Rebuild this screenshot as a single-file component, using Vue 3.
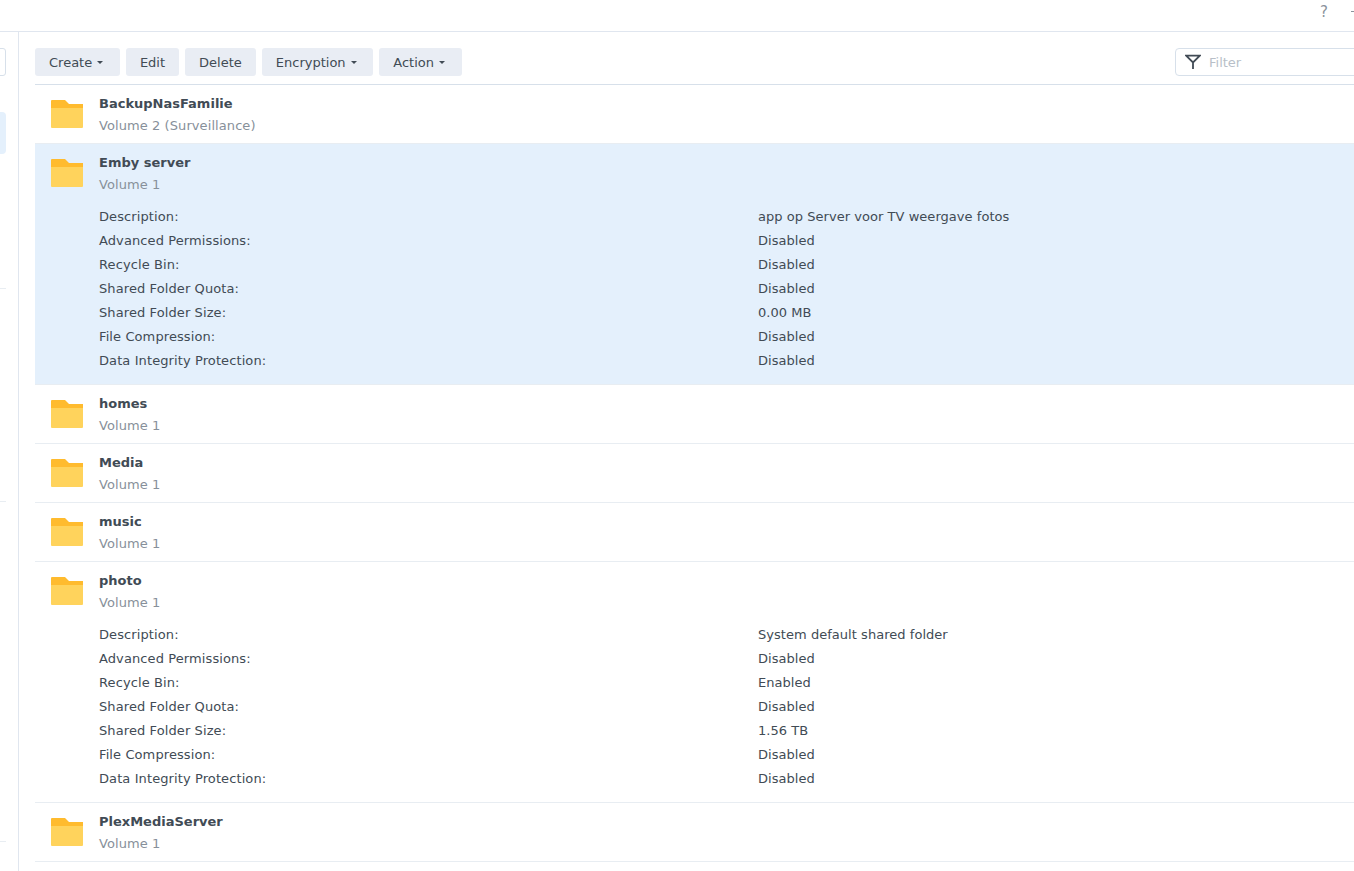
<script setup>
const rows = [
  { name: 'BackupNasFamilie', vol: 'Volume 2 (Surveillance)' },
  { name: 'Emby server', vol: 'Volume 1', selected: true, desc: 'app op Server voor TV weergave fotos', recycle: 'Disabled', size: '0.00 MB' },
  { name: 'homes', vol: 'Volume 1' },
  { name: 'Media', vol: 'Volume 1' },
  { name: 'music', vol: 'Volume 1' },
  { name: 'photo', vol: 'Volume 1', desc: 'System default shared folder', recycle: 'Enabled', size: '1.56 TB' },
  { name: 'PlexMediaServer', vol: 'Volume 1' },
]
const details = (r) => [
  ['Description:', r.desc],
  ['Advanced Permissions:', 'Disabled'],
  ['Recycle Bin:', r.recycle],
  ['Shared Folder Quota:', 'Disabled'],
  ['Shared Folder Size:', r.size],
  ['File Compression:', 'Disabled'],
  ['Data Integrity Protection:', 'Disabled'],
]
const buttons = [
  { label: 'Create', caret: true },
  { label: 'Edit' },
  { label: 'Delete' },
  { label: 'Encryption', caret: true },
  { label: 'Action', caret: true },
]
</script>

<template>
  <div class="page">
    <header class="topbar">
      <span class="help">?</span>
      <span class="dash"></span>
    </header>
    <div class="body">
      <aside class="side">
        <div class="side-input"></div>
        <div class="side-selected"></div>
        <div class="side-line l1"></div>
        <div class="side-line l2"></div>
        <div class="side-line l3"></div>
      </aside>
      <main class="main">
        <div class="toolbar">
          <button v-for="b in buttons" :key="b.label" class="btn">
            {{ b.label }}<i v-if="b.caret" class="caret"></i>
          </button>
          <div class="filter">
            <svg width="16" height="16" viewBox="0 0 16 16" class="funnel">
              <path d="M1.2 1.6h13.6L8 8.4zM8 8v7" fill="none" stroke="#414b55" stroke-width="1.8" stroke-linejoin="miter" />
            </svg>
            <span class="placeholder">Filter</span>
          </div>
        </div>
        <div class="list">
          <div v-for="r in rows" :key="r.name" class="row" :class="{ selected: r.selected }">
            <svg class="folder" width="32" height="28" viewBox="0 0 32 28">
              <path d="M0 1a1 1 0 0 1 1-1h13l4 4h14v5H0z" fill="#ffbb2e" />
              <path d="M0 8h32v19a1 1 0 0 1-1 1H1a1 1 0 0 1-1-1z" fill="#ffd35c" />
            </svg>
            <div class="info">
              <div class="name">{{ r.name }}</div>
              <div class="vol">{{ r.vol }}</div>
              <div v-if="r.desc" class="details">
                <div v-for="d in details(r)" :key="d[0]" class="detail">
                  <span class="k">{{ d[0] }}</span>
                  <span class="v">{{ d[1] }}</span>
                </div>
              </div>
            </div>
          </div>
        </div>
      </main>
    </div>
  </div>
</template>

<style>
html, body { margin: 0; overflow: hidden; background: #fff; }
</style>

<style scoped>
.page {
  width: 1354px;
  height: 871px;
  overflow: hidden;
  font-family: "DejaVu Sans", sans-serif;
  font-size: 13px;
  color: #414b55;
  background: #fff;
}
.topbar {
  height: 31px;
  border-bottom: 1px solid #e0e6ef;
  position: relative;
  box-sizing: content-box;
}
.help {
  position: absolute;
  left: 1320px;
  top: 3px;
  font-size: 15px;
  line-height: 18px;
  color: #8a929b;
}
.dash {
  position: absolute;
  left: 1351px;
  top: 11px;
  width: 5px;
  height: 1px;
  background: #8a929b;
}
.body { display: flex; height: 839px; }
.side {
  width: 18px;
  flex: none;
  border-right: 1px solid #e0e6ef;
  position: relative;
}
.side-input {
  position: absolute;
  left: -6px;
  top: 16px;
  width: 10px;
  height: 26px;
  border: 1px solid #d7e0ea;
  border-radius: 3px;
}
.side-selected {
  position: absolute;
  left: -6px;
  top: 80px;
  width: 12px;
  height: 42px;
  background: #e4f0fc;
  border-radius: 4px;
}
.side-line {
  position: absolute;
  left: 0;
  width: 6px;
  height: 1px;
  background: #e8edf2;
}
.l1 { top: 256px; }
.l2 { top: 469px; }
.l3 { top: 809px; }
.main { flex: 1; min-width: 0; padding: 16px 0 0 16px; }
.toolbar {
  display: flex;
  gap: 6px;
  height: 28px;
  padding-bottom: 8px;
  border-bottom: 1px solid #d7e0ea;
  position: relative;
}
.btn {
  height: 28px;
  padding: 0 14px;
  border: 0;
  border-radius: 3px;
  background: #e9edf4;
  color: #414b55;
  font: inherit;
  display: flex;
  align-items: center;
}
.caret {
  display: inline-block;
  margin: 0 2.7px 0 5px;
  border-top: 3px solid #414b55;
  border-left: 3px solid transparent;
  border-right: 3px solid transparent;
}
.filter {
  position: absolute;
  left: 1140px;
  top: 0;
  width: 200px;
  height: 26px;
  border: 1px solid #d7e0ea;
  border-radius: 4px;
  display: flex;
  align-items: center;
  padding-left: 9px;
}
.funnel { flex: none; }
.placeholder { margin-left: 8px; color: #b8bfc8; }
.row {
  display: flex;
  padding: 8px 0 6px 16px;
  border-bottom: 1px solid #e8edf2;
  min-height: 44px;
}
.row.selected { background: #e4f0fc; }
.folder { flex: none; margin: 7px 16px 0 0; }
.info { flex: 1; min-width: 0; }
.name { font-weight: 700; line-height: 22px; }
.vol { color: #87909a; line-height: 22px; letter-spacing: 0.08px; }
.details { margin-top: 9px; margin-bottom: 5px; }
.detail { display: flex; line-height: 24px; }
.k { width: 659px; flex: none; letter-spacing: 0.1px; }
.v { letter-spacing: 0.04px; }
</style>
